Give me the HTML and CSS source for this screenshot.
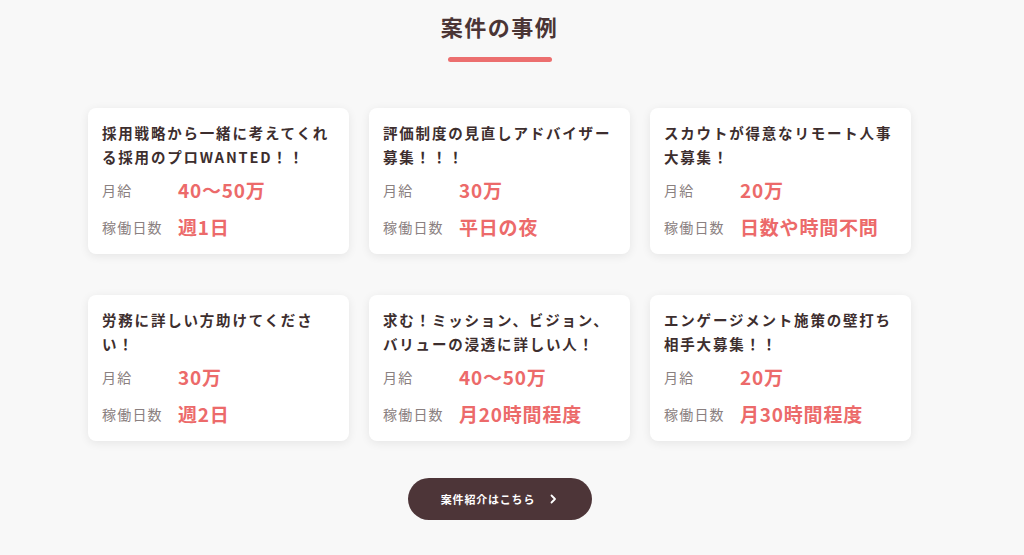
FILE: index.html
```html
<!DOCTYPE html>
<html lang="ja">
<head>
    <meta charset="UTF-8">
    <meta name="viewport" content="width=device-width, initial-scale=1.0">
    <title>案件の事例</title>
    <link rel="stylesheet" href="styles.css">
</head>
<body>
    <section class="cases">
        <h2 class="cases-title">案件の事例</h2>
        <div class="cases-bar"></div>

        <div class="case-grid">
            <div class="case-card">
                <p class="case-name">採用戦略から一緒に考えてくれる採用のプロWANTED！！</p>
                <div class="case-row"><span class="case-label">月給</span><span class="case-value">40〜50万</span></div>
                <div class="case-row"><span class="case-label">稼働日数</span><span class="case-value">週1日</span></div>
            </div>
            <div class="case-card">
                <p class="case-name">評価制度の見直しアドバイザー募集！！！</p>
                <div class="case-row"><span class="case-label">月給</span><span class="case-value">30万</span></div>
                <div class="case-row"><span class="case-label">稼働日数</span><span class="case-value">平日の夜</span></div>
            </div>
            <div class="case-card">
                <p class="case-name">スカウトが得意なリモート人事大募集！</p>
                <div class="case-row"><span class="case-label">月給</span><span class="case-value">20万</span></div>
                <div class="case-row"><span class="case-label">稼働日数</span><span class="case-value">日数や時間不問</span></div>
            </div>
            <div class="case-card">
                <p class="case-name">労務に詳しい方助けてください！</p>
                <div class="case-row"><span class="case-label">月給</span><span class="case-value">30万</span></div>
                <div class="case-row"><span class="case-label">稼働日数</span><span class="case-value">週2日</span></div>
            </div>
            <div class="case-card">
                <p class="case-name">求む！ミッション、ビジョン、バリューの浸透に詳しい人！</p>
                <div class="case-row"><span class="case-label">月給</span><span class="case-value">40〜50万</span></div>
                <div class="case-row"><span class="case-label">稼働日数</span><span class="case-value">月20時間程度</span></div>
            </div>
            <div class="case-card">
                <p class="case-name">エンゲージメント施策の壁打ち相手大募集！！</p>
                <div class="case-row"><span class="case-label">月給</span><span class="case-value">20万</span></div>
                <div class="case-row"><span class="case-label">稼働日数</span><span class="case-value">月30時間程度</span></div>
            </div>
        </div>

        <div class="cases-more">
            <a class="more-btn" href="#">案件紹介はこちら
                <svg width="10" height="10" viewBox="0 0 10 10"><path d="M3.5 1.5 L7 5 L3.5 8.5" fill="none" stroke="#fff" stroke-width="1.8" stroke-linecap="round" stroke-linejoin="round"/></svg>
            </a>
        </div>
    </section>
</body>
</html>
```

FILE: styles.css
```css
body {
    margin: 0;
    background-color: #f8f8f8;
    font-family: "Noto Sans CJK JP", "Noto Sans", sans-serif;
    color: #3d2e2e;
}
.cases {
    width: 823px;
    margin-left: 88px;
    padding-top: 8px;
}
.cases-title {
    margin: 0;
    text-align: center;
    font-size: 22px;
    font-weight: 700;
    letter-spacing: 1.5px;
    line-height: 36px;
    color: #4a3535;
}
.cases-bar {
    width: 104px;
    height: 5px;
    margin: 13px auto 0;
    border-radius: 3px;
    background-color: #ec6f6f;
}
.case-grid {
    display: grid;
    grid-template-columns: repeat(3, 261px);
    column-gap: 20px;
    row-gap: 41px;
    margin-top: 46px;
}
.case-card {
    height: 146px;
    box-sizing: border-box;
    padding: 13px 14px 0;
    background-color: #fff;
    border-radius: 8px;
    box-shadow: 0 2px 10px rgba(0, 0, 0, 0.08);
}
.case-name {
    margin: 0 0 2px;
    font-size: 14.5px;
    font-weight: 700;
    line-height: 24px;
    letter-spacing: 1.8px;
    color: #3d2e2e;
}
.case-row {
    display: flex;
    align-items: center;
    height: 37px;
}
.case-label {
    width: 76px;
    font-size: 14px;
    color: #8a8080;
    letter-spacing: 1.2px;
}
.case-value {
    font-size: 19px;
    font-weight: 700;
    color: #ec6a6a;
    letter-spacing: 0.8px;
}
.cases-more {
    display: flex;
    justify-content: center;
    margin-top: 37px;
}
.more-btn {
    display: flex;
    align-items: center;
    justify-content: center;
    gap: 13px;
    width: 184px;
    height: 42px;
    border-radius: 21px;
    background-color: #4d3538;
    color: #fff;
    font-size: 11px;
    font-weight: 700;
    letter-spacing: 0.8px;
    text-decoration: none;
}
```
